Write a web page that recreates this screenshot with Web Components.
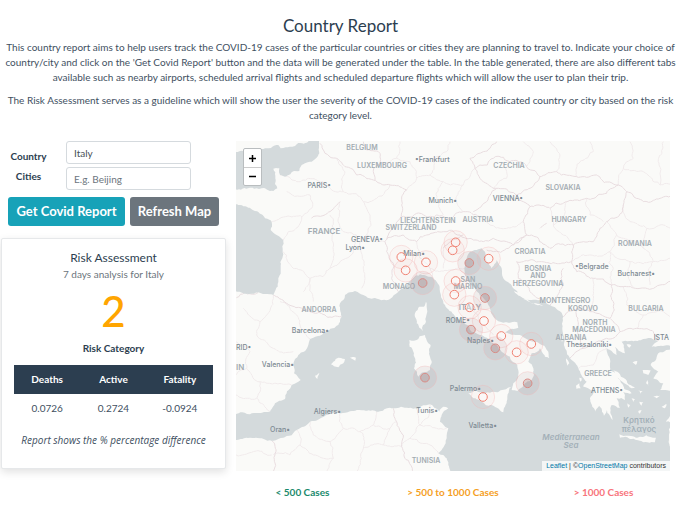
<!DOCTYPE html>
<html lang="en">
<head>
<meta charset="utf-8">
<title>Country Report</title>
<style>
  body { margin: 0; background: #fff; color: #2c3e50; font: 10px/15px Lato, "Open Sans", sans-serif; }
</style>
</head>
<body>
<country-report-page>
  <report-intro slot="intro" heading="Country Report">
    <p>This country report aims to help users track the COVID-19 cases of the particular countries or cities they are planning to travel to. Indicate your choice of country/city and click on the 'Get Covid Report' button and the data will be generated under the table. In the table generated, there are also different tabs available such as nearby airports, scheduled arrival flights and scheduled departure flights which will allow the user to plan their trip.</p>
    <p>The Risk Assessment serves as a guideline which will show the user the severity of the COVID-19 cases of the indicated country or city based on the risk category level.</p>
  </report-intro>
  <report-form slot="side"></report-form>
  <risk-card slot="side">
    <span slot="title">Risk Assessment</span>
    <span slot="subtitle">7 days analysis for Italy</span>
    <span slot="score">2</span>
  </risk-card>
  <cases-map slot="main"></cases-map>
  <cases-legend slot="main"></cases-legend>
</country-report-page>

<script>
class BaseElement extends HTMLElement {
  constructor() {
    super();
    const t = document.createElement('template');
    t.innerHTML = this.constructor.markup;
    this.attachShadow({ mode: 'open' }).append(t.content.cloneNode(true));
  }
}

customElements.define('country-report-page', class extends BaseElement {
  static markup = `
    <style>
      :host { display: block; padding: 12px 13px 6px 1px; }
      header { margin: 0 -10px 18px 0; }
      .columns { display: grid; grid-template-columns: 225fr 434fr; gap: 10px; align-items: start; }
    </style>
    <header><slot name="intro"></slot></header>
    <main class="columns">
      <section><slot name="side"></slot></section>
      <section><slot name="main"></slot></section>
    </main>`;
});

customElements.define('report-intro', class extends BaseElement {
  static markup = `
    <style>
      :host { display: block; text-align: center; }
      h1 { margin: 0; font-size: 17px; line-height: 28px; font-weight: 400; }
      ::slotted(p) { margin: 0 0 8px; color: #41505f; }
    </style>
    <h1></h1><slot></slot>`;
  connectedCallback() {
    this.shadowRoot.querySelector('h1').textContent = this.getAttribute('heading');
  }
});

customElements.define('report-form', class extends BaseElement {
  static markup = `
    <style>
      :host { display: block; }
      form { margin: 0; }
      .fields { display: grid; grid-template-columns: 55px 125px; column-gap: 10px; }
      .labels { display: grid; grid-auto-rows: 20px; align-items: center; align-content: start; justify-items: center; padding-top: 5px; font-weight: 700; }
      .inputs { display: grid; gap: 3px; }
      input { box-sizing: border-box; width: 100%; height: 23px; padding: 0 7px; border: 1px solid #d5dade; border-radius: 3px; background: #fff; color: #495057; font: inherit; }
      input::placeholder { color: #6c757d; opacity: 1; }
      .actions { display: grid; grid-template-columns: 117px 89px; gap: 5px; padding: 7px 7px 12px; }
      button { height: 29px; padding: 0; border: 0; border-radius: 3px; color: #fff; font: 700 13px/29px Lato, "Open Sans", sans-serif; white-space: nowrap; }
      .primary { background: #17a2b8; }
      .secondary { background: #6c757d; }
    </style>
    <form>
      <div class="fields">
        <div class="labels"><label for="country">Country</label><label for="city">Cities</label></div>
        <div class="inputs">
          <input id="country" type="text" value="Italy">
          <input id="city" type="text" placeholder="E.g. Beijing">
        </div>
      </div>
      <div class="actions">
        <button type="button" class="primary">Get Covid Report</button>
        <button type="button" class="secondary">Refresh Map</button>
      </div>
    </form>`;
});

customElements.define('risk-card', class extends BaseElement {
  static markup = `
    <style>
      :host { display: block; border: 1px solid #e6e8ea; border-radius: 2px; background: #fff; box-shadow: 0 3px 8px rgba(0,0,0,.12); padding: 10px 12px 20px; text-align: center; }
      h2 { margin: 0; font-size: 12px; line-height: 18px; font-weight: 400; }
      .sub { color: #6c757d; line-height: 15px; }
      .score { color: #ffa500; font-size: 42px; line-height: 58px; font-weight: 500; }
      .caption { font-weight: 700; line-height: 16px; margin-bottom: 9px; }
      table { width: 100%; border-collapse: collapse; table-layout: fixed; }
      th { background: #2c3e50; color: #fff; padding: 7px 0; }
      td { padding: 7px 0 8px; color: #41505f; }
      em { display: block; margin-top: 9px; color: #41505f; font: italic 10px/15px "Open Sans", sans-serif; white-space: nowrap; }
    </style>
    <h2><slot name="title"></slot></h2>
    <div class="sub"><slot name="subtitle"></slot></div>
    <div class="score"><slot name="score"></slot></div>
    <div class="caption">Risk Category</div>
    <table>
      <thead><tr><th scope="col">Deaths</th><th scope="col">Active</th><th scope="col">Fatality</th></tr></thead>
      <tbody><tr><td>0.0726</td><td>0.2724</td><td>-0.0924</td></tr></tbody>
    </table>
    <em>Report shows the % percentage difference</em>`;
});

/* Map geometry: flat lists of x y pairs, three units to a map pixel. */
const SEAS = [
  '0 50 60 40 100 42 145 30 152 40 180 35 205 24 235 20 236 0 272 0 268 55 245 80 215 90 208 108 185 112 165 125 150 120 148 100 130 101 136 130 142 160 130 168 95 160 60 158 0 162',
  '0 205 30 210 50 215 75 228 98 240 105 250 125 262 122 285 140 300 160 315 158 345 152 400 143 455 130 480 85 472 0 470',
  '0 838 60 838 120 830 135 805 165 792 185 750 212 735 192 715 190 690 205 660 235 630 240 612 290 590 325 570 335 545 330 505 345 480 375 468 400 480 430 490 480 492 505 470 545 435 570 418 600 425 620 440 630 470 640 505 665 530 700 560 725 590 760 603 790 625 815 650 840 665 862 690 865 720 850 745 845 765 862 768 885 745 905 735 910 700 895 680 905 655 930 640 945 665 958 670 955 650 920 620 870 600 825 592 865 578 862 562 830 562 790 545 770 500 735 460 710 430 705 380 720 350 755 340 765 350 770 380 785 400 800 375 815 400 820 430 850 460 900 495 960 510 1000 545 1000 600 1005 640 1020 670 1045 700 1070 740 1060 755 1095 768 1080 790 1095 830 1108 812 1122 842 1130 825 1148 855 1145 810 1170 818 1160 790 1185 795 1180 770 1205 775 1170 735 1140 705 1130 640 1160 660 1155 635 1185 655 1175 620 1200 618 1240 612 1285 618 1265 635 1320 632 1340 640 1285 655 1262 690 1285 710 1270 730 1300 745 1290 765 1340 775 1340 1030 675 1030 655 990 650 970 625 955 650 910 655 880 630 860 635 840 655 820 640 815 628 830 600 808 560 822 490 820 440 830 380 825 330 835 290 840 240 860 200 885 160 908 130 917 90 910 60 908 0 918'
];
const ISLANDS = [
  '588 500 592 530 588 560 578 588 560 565 555 535 565 518 582 515',
  '538 615 560 615 585 600 602 630 600 665 600 705 580 712 565 725 552 700 552 655',
  '715 775 740 768 790 770 845 755 832 785 825 815 820 832 790 812 755 800 725 785',
  '303 688 325 668 345 672 340 685 325 697',
  '360 668 378 668 376 677',
  '255 722 268 713 262 732',
  '1168 898 1195 902 1230 905 1278 908 1275 922 1240 922 1200 912 1170 908',
  '1150 705 1180 728 1215 758 1205 760 1170 735',
  '993 600 1000 605 996 622', '1008 670 1018 685 1012 692', '1038 752 1048 745 1052 760 1040 762',
  '1048 728 1055 730 1052 740', '1190 628 1204 630 1198 638', '1208 682 1222 678 1218 690', '1238 705 1262 706 1255 720 1240 715',
  '1252 735 1256 752 1248 745', '1225 765 1238 768 1232 776', '1205 790 1215 793 1210 802', '1228 800 1240 802 1235 812',
  '1192 805 1200 810 1196 818', '1270 785 1290 782 1280 790', '1295 815 1310 808 1305 820', '1308 860 1322 840 1320 862', '1225 828 1235 826 1230 836',
  '852 468 880 480 910 495 875 486', '880 492 915 508 940 512 905 505'
];
/* National frontiers. */
const BORDERS = [
  '270 25 285 55 320 70 345 95 380 120 430 135 480 150 530 165', '400 20 410 45 450 55 450 85 430 110 435 135',
  '530 165 515 210 510 250 480 290 465 320 470 350 490 385 485 430 505 470',
  '470 310 520 300 560 320 590 300 640 290 690 300 720 310', '515 245 560 235 620 240 660 255 700 230 740 240',
  '720 310 760 320 830 320 850 330 890 300 880 260', '735 100 790 70 840 80 890 95 930 125 900 160 860 180 800 160 760 140 735 100',
  '800 160 770 200 730 230', '860 180 880 200 900 215 880 260', '900 215 960 220 1010 200 1070 190 1130 175 1165 150 1190 170',
  '930 125 980 110 1040 125 1100 120 1165 150', '735 100 720 70 760 50 800 20', '1190 170 1180 210 1130 260 1090 320 1030 330 960 340 890 300',
  '1190 170 1240 200 1290 190 1340 170', '1030 330 1025 380 1040 410 1090 430 1145 450 1180 455 1230 460 1290 450 1340 440',
  '890 300 850 330 790 350 770 345', '860 380 900 375 960 385 1025 380', '860 380 865 430 900 470 945 500', '1000 400 1000 450 980 490 960 510',
  '1145 450 1150 500 1140 550 1170 590 1130 610 1060 640 1020 670', '1170 590 1220 580 1270 590 1285 618', '1000 545 1040 520 1080 530 1140 550',
  '1040 520 1045 600 1060 640', '18 490 85 472', '130 480 170 505 240 530 290 545 335 545', '515 935 520 900 500 860 490 820',
  '515 935 525 970 550 1010', '125 917 135 960 130 1010', '640 340 660 320 700 300', '245 250 300 230 330 200', '930 280 950 265'
];
/* Regional boundaries. */
const REGIONS = [
  '170 170 240 180 245 220 215 245 150 250 120 262', '150 120 200 140 260 135 290 150 340 170 400 200', '215 245 175 290 160 315',
  '330 200 325 250 340 290 380 300 370 350 330 380 300 400 240 430 220 470', '160 350 190 400 240 430 250 500', '300 240 310 290 310 350 300 400',
  '340 170 345 110 320 70', '400 200 440 190 480 150', '400 200 420 240 410 300 390 340 400 400 395 460', '410 300 465 320',
  '530 165 560 130 600 120 640 140 620 190 640 240', '600 120 610 70 650 50 660 20', '450 85 500 70 540 80 560 130', '500 70 510 20',
  '640 140 700 150 735 100', '840 80 830 130 790 160', '980 110 990 60 960 20', '1040 125 1050 80 1090 50 1080 20', '1165 150 1180 100 1210 70 1200 20',
  '1180 100 1240 110 1290 150 1340 140', '1290 150 1285 80 1300 20', '890 95 910 50 880 20', '960 220 970 270 1000 300 1030 330',
  '1070 190 1080 240 1120 260', '1010 200 1000 250 970 270', '1180 210 1200 260 1250 280 1240 340 1270 380 1260 450',
  '1250 280 1300 270 1340 290', '1130 260 1160 300 1140 350 1150 400 1145 450', '1160 300 1240 340', '1140 350 1200 380 1270 380 1340 360',
  '1200 380 1210 455', '1025 380 1080 360 1140 350', '1180 455 1190 510 1240 540 1220 580', '1240 540 1300 530 1340 550', '1080 530 1090 470 1090 430',
  '40 520 90 560 80 600 130 640 190 650', '18 620 60 650 50 700 90 740 150 745 185 750', '130 480 110 540 90 560', '150 500 200 540 220 590 240 612',
  '50 700 18 720', '90 740 80 790 120 830', '18 780 80 790', '240 860 250 900 300 920 310 970 290 1010', '200 885 210 930 180 960 130 960',
  '330 835 340 880 390 890 400 940 380 1010', '340 880 300 920', '440 830 430 870 390 890', '430 870 480 880 500 860', '400 940 460 930 515 935',
  '460 930 480 880', '210 930 250 960 310 970', '560 822 570 870 540 910 515 935', '570 870 620 880 650 880', '540 910 600 930 625 955',
  '600 808 590 850 570 870', '18 960 70 950 125 960', '560 320 570 370 600 400 610 430', '600 400 680 400 705 400', '640 340 640 400',
  '760 500 730 530 760 570 790 600', '1045 700 1090 690 1110 650 1130 640', '700 150 680 200 700 230', '740 240 780 270 830 280 880 260'
];
const LABELS = [
  ['BELGIUM', 395, 46, 'c'], ['LUXEMBOURG', 455, 99, 'c'], ['CZECHIA', 838, 99, 'c'], ['SLOVAKIA', 1000, 166, 'c'],
  ['HUNGARY', 1016, 262, 'c'], ['ROMANIA', 1214, 333, 'c'], ['LIECHTENSTEIN', 595, 264, 'c'], ['AUSTRIA', 745, 261, 'c'],
  ['SWITZERLAND', 542, 285, 'c'], ['FRANCE', 281, 297, 'c b'], ['CROATIA', 900, 358, 'c'], ['BOSNIA', 924, 408, 'c'], ['AND', 924, 430, 'c'],
  ['HERZEGOVINA', 924, 453, 'c'], ['MONTENEGRO', 1004, 505, 'c'], ['KOSOVO', 1060, 527, 'c'], ['BULGARIA', 1247, 527, 'c'],
  ['NORTH', 1094, 571, 'c'], ['MACEDONIA', 1093, 591, 'c'], ['ALBANIA', 1022, 614, 'c'], ['GREECE', 1103, 722, 'c'],
  ['MONACO', 507, 463, 'c'], ['SAN', 714, 441, 'c'], ['MARINO', 714, 463, 'c'], ['ITALY', 719, 524, 'c b'], ['ANDORRA', 268, 530, 'c'],
  ['TUNISIA', 588, 984, 'c'],
  ['PARIS•', 304, 159, 't e'], ['•Frankfurt', 554, 80, 't'], ['Munich•', 682, 203, 't e'], ['VIENNA•', 878, 198, 't e'],
  ['GENEVA•', 460, 320, 't e'], ['Lyon•', 405, 346, 't e'], ['Milan•', 584, 362, 't e'], ['•Belgrade', 1036, 401, 't'],
  ['Bucharest•', 1276, 422, 't e'], ['Barcelona•', 298, 593, 't e'], ['Valencia•', 193, 696, 't e'], ['Algiers•', 333, 836, 't e'],
  ['Oran•', 181, 890, 't e'], ['Tunis•', 625, 834, 't e'], ['Palermo•', 754, 767, 't e'], ['Valletta•', 802, 880, 't e'],
  ['ROME•', 720, 565, 't e'], ['Naples•', 791, 623, 't e'], ['Thessaloniki•', 1146, 636, 't e'], ['ATHENS•', 1178, 774, 't e'],
  ['RID•', 18, 644, 't'], ['IN', 18, 704, 'c b s'], ['ISTA', 1318, 614, 't e'],
  ['Mediterranean', 1022, 914, 'w i'], ['Sea', 1022, 938, 'w i'], ['Κρητικό', 1227, 864, 'w'], ['πέλαγος', 1227, 890, 'w']
];
/* x, y, and 1 where the marker lies over water. */
const MARKERS = [
  [514,366,0],[527,406,0],[588,382,0],[578,444,1],[677,322,0],[668,346,0],[718,384,1],[776,371,0],[677,438,0],[673,479,0],
  [765,489,1],[719,517,0],[762,558,0],[723,584,1],[814,603,0],[796,640,1],[860,652,0],[904,627,0],[893,745,1],[585,728,1],[759,786,0]
];

let seed = 7;
const random = () => (seed = (seed * 16807) % 2147483647) / 2147483647 - 0.5;
/* Splits every long segment at a displaced midpoint, for natural-looking coasts and frontiers. */
function roughen(list, closed, amount) {
  const n = list.split(' ').map(Number), pts = [];
  for (let i = 0; i < n.length; i += 2) pts.push([n[i], n[i + 1]]);
  const out = [pts[0]];
  const split = (a, b) => {
    const d = Math.hypot(a[0] - b[0], a[1] - b[1]);
    if (d > 9) {
      const m = [(a[0] + b[0]) / 2 + random() * d * amount, (a[1] + b[1]) / 2 + random() * d * amount];
      split(a, m); split(m, b);
    } else out.push(b);
  };
  for (let i = 1; i < pts.length; i++) split(pts[i - 1], pts[i]);
  if (closed) split(pts[pts.length - 1], pts[0]);
  return 'M' + out.map(p => Math.round(p[0]) + ' ' + Math.round(p[1])).join('L') + (closed ? 'Z' : '');
}
const path = (lists, cls, closed, amount) => `<path class="${cls}" d="${lists.map(l => roughen(l, closed, amount)).join('')}"/>`;
const px = v => Math.round(v / 3);

customElements.define('cases-map', class extends BaseElement {
  static markup = `
    <style>
      :host { display: block; position: relative; overflow: hidden; background: #fafaf8; }
      svg { display: block; width: 100%; }
      .land { fill: #fafaf8; }
      .sea { fill: #d4dadc; }
      .border { fill: none; stroke: #e9dde0; stroke-width: 3; }
      .region { fill: none; stroke: #f1ebec; stroke-width: 3; }
      text { font: 500 7px Inter, "Open Sans", sans-serif; fill: #8c989f; text-anchor: middle; }
      .c { fill: #a3acb2; font-weight: 600; }
      .b { font-size: 8px; }
      .t { text-anchor: start; fill: #7d8a93; }
      .e { text-anchor: end; }
      .s { text-anchor: start; }
      .w { fill: #a3b0b8; font-size: 8px; font-weight: 600; }
      .i { font-style: italic; }
      .halo { fill: #e05050; stroke: #f3b6b6; stroke-opacity: .55; stroke-width: 2; fill-opacity: .03; }
      .dot { fill: #fff; fill-opacity: .35; stroke: #ef8272; stroke-width: 3; }
      .wet .halo { fill: #7a5a60; fill-opacity: .08; }
      .wet .dot { fill: #a07070; fill-opacity: .25; stroke: #d98c86; }
      .zoom { position: absolute; top: 7px; left: 7px; display: grid; border: 1px solid #b9bdbf; border-radius: 2px; background: #fff; }
      .zoom button { width: 17px; height: 18px; padding: 0; border: 0; background: none; color: #000; display: grid; place-items: center; }
      .zoom button + button { border-top: 1px solid #ccc; }
      .zoom svg { width: 9px; height: 9px; stroke: #000; stroke-width: 1.5; }
      .credit { position: absolute; right: 0; bottom: 0; padding: 0 4px; background: rgba(255,255,255,.75); color: #333; font: 7px/10px "Liberation Sans", sans-serif; white-space: nowrap; }
      a { color: #0078a8; text-decoration: none; }
    </style>
    <svg viewBox="0 0 434 330" role="img" aria-label="Map of cases in Italy">
      <g transform="translate(-6 -6) scale(.3333)">
        ${path(REGIONS, 'region', false, .3)}
        ${path(BORDERS, 'border', false, .3)}
        ${path(SEAS, 'sea', true, .25)}
        ${path(ISLANDS, 'land', true, .3)}
      </g>
      <g transform="translate(-6 -6)">
        ${LABELS.map(([t, x, y, c]) => `<text class="${c}" x="${px(x)}" y="${px(y)}">${t}</text>`).join('')}
      </g>
      <g transform="translate(-6 -6) scale(.3333)">
        ${MARKERS.map(([x, y, wet]) => `<g class="${wet ? 'wet' : 'dry'}"><circle class="halo" cx="${x}" cy="${y}" r="35"/><circle class="dot" cx="${x}" cy="${y}" r="13"/></g>`).join('')}
      </g>
    </svg>
    <div class="zoom">
      <button type="button" aria-label="Zoom in"><svg viewBox="0 0 9 9"><path d="M1 4.5H8M4.5 1V8"/></svg></button>
      <button type="button" aria-label="Zoom out"><svg viewBox="0 0 9 9"><path d="M1 4.5H8"/></svg></button>
    </div>
    <div class="credit"><a href="#leaflet">Leaflet</a> | ©<a href="#osm">OpenStreetMap</a> contributors</div>`;
});

customElements.define('cases-legend', class extends BaseElement {
  static markup = `
    <style>
      :host { display: grid; grid-template-columns: 133fr 168fr 133fr; padding-top: 13px; text-align: center; font-weight: 700; line-height: 16px; }
      .low { color: #1a8a6c; }
      .mid { color: #f5a01f; }
      .high { color: #f8747c; }
    </style>
    <span class="low">&lt; 500 Cases</span>
    <span class="mid">&gt; 500 to 1000 Cases</span>
    <span class="high">&gt; 1000 Cases</span>`;
});
</script>
</body>
</html>
